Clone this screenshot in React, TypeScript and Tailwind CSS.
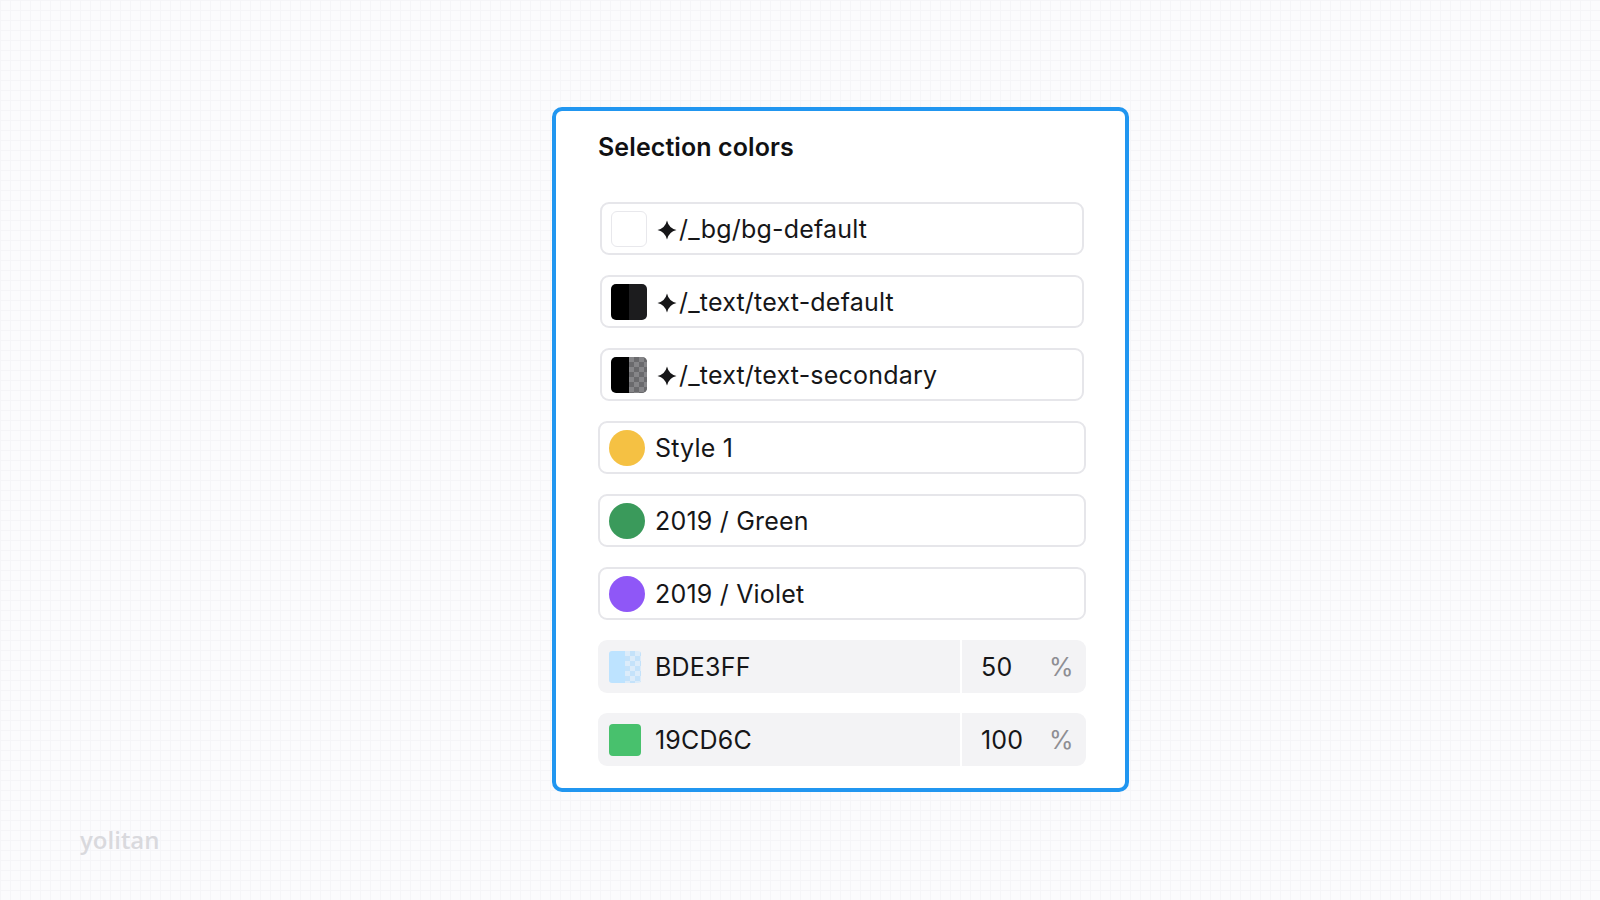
import React from "react";

const font = { fontFamily: "Inter, 'Noto Sans', sans-serif" };

function Star() {
  return (
    <svg width="20" height="20" viewBox="0 0 20 20" className="mr-[2px] inline-block align-[-2px]">
      <path d="M10 0.5 Q11.8 8.2 19.5 10 Q11.8 11.8 10 19.5 Q8.2 11.8 0.5 10 Q8.2 8.2 10 0.5 Z" fill="#161618" />
    </svg>
  );
}

function StyleRow({ swatch, label, inset }: { swatch: React.ReactNode; label: React.ReactNode; inset?: boolean }) {
  return (
    <div
      className={`flex h-[53px] items-center rounded-[9px] border-2 border-[#e6e6ea] bg-white pl-[9px] ${inset ? "mx-[2px]" : ""}`}
    >
      <div className="flex w-[36px] shrink-0 items-center">{swatch}</div>
      <div className="ml-[10px] pt-[2px] text-[25px] leading-none tracking-[0.2px] text-[#161618]">{label}</div>
    </div>
  );
}

function HexRow({ swatch, hex, pct }: { swatch: React.ReactNode; hex: string; pct: string }) {
  return (
    <div className="flex h-[53px] overflow-hidden rounded-[9px]">
      <div className="flex flex-1 items-center bg-[#f3f3f5] pl-[11px]">
        <div className="flex w-[36px] shrink-0 items-center">{swatch}</div>
        <div className="ml-[10px] pt-[2px] text-[25px] leading-none tracking-[0.2px] text-[#161618]">{hex}</div>
      </div>
      <div className="w-[2px] bg-white" />
      <div className="flex w-[124px] items-center bg-[#f3f3f5] pl-[19px]">
        <span className="w-[68px] pt-[2px] text-[25px] leading-none tracking-[0.2px] text-[#161618]">{pct}</span>
        <span className="pt-[2px] text-[25px] leading-none text-[#8e8e93]">%</span>
      </div>
    </div>
  );
}

export default function App() {
  return (
    <div
      className="relative min-h-screen w-full bg-[#fbfbfd] bg-[linear-gradient(to_right,#f5f5f8_1px,transparent_1px),linear-gradient(to_bottom,#f5f5f8_1px,transparent_1px)] bg-[size:10px_10px] pl-[552px] pt-[107px]"
      style={font}
    >
      <div className="w-[577px] rounded-[10px] border-4 border-[#2196f0] bg-white pb-[22px] pl-[42px] pr-[39px] pt-[22px]">
        <div className="h-[28px] text-[25px] font-semibold leading-[28px] tracking-[0.1px] text-[#111113]">
          Selection colors
        </div>
        <div className="mt-[41px] flex flex-col gap-[20px]">
          <StyleRow
            inset
            swatch={<div className="h-[36px] w-[36px] rounded-[6px] border border-[#e8e8ec] bg-white" />}
            label={<><Star />/_bg/bg-default</>}
          />
          <StyleRow
            inset
            swatch={
              <div className="flex h-[36px] w-[36px] overflow-hidden rounded-[5px]">
                <div className="h-full w-1/2 bg-black" />
                <div className="h-full w-1/2 bg-[#1c1c1e]" />
              </div>
            }
            label={<><Star />/_text/text-default</>}
          />
          <StyleRow
            inset
            swatch={
              <div className="flex h-[36px] w-[36px] overflow-hidden rounded-[5px]">
                <div className="h-full w-1/2 bg-black" />
                <div className="h-full w-1/2 bg-[#6f6f72] bg-[conic-gradient(#6a6a6d_25%,#858588_0_50%,#6a6a6d_0_75%,#858588_0)] bg-[size:10px_10px]" />
              </div>
            }
            label={<><Star />/_text/text-secondary</>}
          />
          <StyleRow swatch={<div className="h-[36px] w-[36px] rounded-full bg-[#f5c143]" />} label="Style 1" />
          <StyleRow swatch={<div className="h-[36px] w-[36px] rounded-full bg-[#3a9a5b]" />} label="2019 / Green" />
          <StyleRow swatch={<div className="h-[36px] w-[36px] rounded-full bg-[#8f57f7]" />} label="2019 / Violet" />
          <HexRow
            swatch={
              <div className="flex h-[32px] w-[32px] overflow-hidden rounded-[3px]">
                <div className="h-full w-1/2 bg-[#bde3ff]" />
                <div className="h-full w-1/2 bg-[conic-gradient(#c4e2fa_25%,#dcecfa_0_50%,#c4e2fa_0_75%,#dcecfa_0)] bg-[size:10px_10px]" />
              </div>
            }
            hex="BDE3FF"
            pct="50"
          />
          <HexRow
            swatch={<div className="h-[32px] w-[32px] rounded-[4px] bg-[#48c16d]" />}
            hex="19CD6C"
            pct="100"
          />
        </div>
      </div>
      <div
        className="absolute left-[80px] top-[826px] text-[24px] font-semibold leading-[28px] text-[#d9d9dd]"
        style={{ fontFamily: "'Open Sans', 'Noto Sans', sans-serif" }}
      >
        yolitan
      </div>
    </div>
  );
}
